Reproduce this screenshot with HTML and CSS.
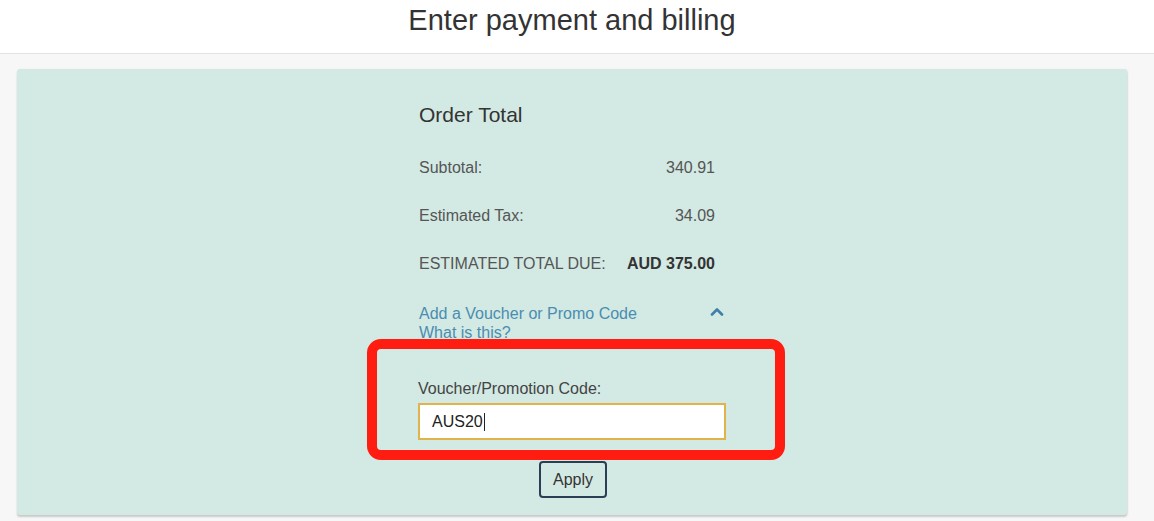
FILE: index.html
```html
<!DOCTYPE html>
<html>
<head>
<meta charset="utf-8">
<link rel="stylesheet" href="styles.css">
</head>
<body>
<header class="top">
  <h1 class="title">Enter payment and billing</h1>
</header>
<main class="page">
  <section class="card">
    <div class="col">
      <h2 class="order-title">Order Total</h2>
      <div class="row"><span>Subtotal:</span><span>340.91</span></div>
      <div class="row"><span>Estimated Tax:</span><span>34.09</span></div>
      <div class="row total"><span>ESTIMATED TOTAL DUE:</span><span class="amt">AUD 375.00</span></div>
      <div class="promo">
        <div class="links">
          <a class="link">Add a Voucher or Promo Code</a>
          <a class="link">What is this?</a>
        </div>
        <svg class="chev" width="14" height="9" viewBox="0 0 14 9"><path d="M2 7.5 L7 2.5 L12 7.5" fill="none" stroke="#3f7fa8" stroke-width="2.6" stroke-linecap="round" stroke-linejoin="round"/></svg>
      </div>
      <div class="highlight">
        <label class="vlabel">Voucher/Promotion Code:</label>
        <div class="input">AUS20<span class="caret"></span></div>
      </div>
      <div class="actions"><button class="apply">Apply</button></div>
    </div>
  </section>
</main>
</body>
</html>
```
FILE: styles.css
```css
html, body { margin: 0; padding: 0; }
body {
  font-family: "Liberation Sans", Arial, sans-serif;
  background: #f7f7f7;
  width: 1154px;
  height: 521px;
  overflow: hidden;
}
.top {
  background: #fff;
  height: 53px;
  border-bottom: 1px solid #e2e2e2;
  display: flex;
  justify-content: center;
  padding-right: 10px;
}
.title {
  margin: 4px 0 0 0;
  font-weight: normal;
  font-size: 29px;
  color: #333;
  letter-spacing: 0;
}
.page {
  padding: 15px 27px 0 17px;
}
.card {
  background: #d3e9e3;
  border-radius: 3px;
  box-shadow: 0 2px 2px rgba(0,0,0,0.18), 1px 0 2px rgba(0,0,0,0.06);
  height: 446px;
  display: flex;
  justify-content: flex-start;
  padding-left: 402px;
  box-sizing: border-box;
}
.col {
  width: 308px;
  display: flex;
  flex-direction: column;
}
.order-title {
  margin: 34px 0 0 0;
  font-weight: normal;
  font-size: 21px;
  color: #333;
}
.row {
  display: flex;
  justify-content: space-between;
  width: 296px;
  font-size: 16px;
  color: #555;
  margin-top: 30px;
}
.row:first-of-type { margin-top: 32px; }
.row.total { margin-top: 30px; }
.amt { font-weight: bold; color: #333; }
.promo {
  display: flex;
  justify-content: space-between;
  align-items: flex-start;
  width: 305px;
  margin-top: 31px;
}
.links { display: flex; flex-direction: column; }
.link {
  color: #4a8db0;
  font-size: 16px;
  line-height: 19px;
}
.chev { margin-top: 3px; }
.highlight {
  margin: -3px 0 0 -52px;
  width: 418px;
  height: 121px;
  box-sizing: border-box;
  border: 10px solid #ff1c10;
  border-radius: 14px;
  padding: 31px 0 0 41px;
}
.vlabel {
  display: block;
  font-size: 16px;
  color: #444;
}
.input {
  margin-top: 5px;
  width: 308px;
  height: 37px;
  box-sizing: border-box;
  border: 2px solid #e0b44a;
  background: #fff;
  font-size: 16px;
  color: #222;
  padding: 8px 0 0 12px;
  display: flex;
  align-items: flex-start;
}
.caret {
  display: inline-block;
  width: 1px;
  height: 18px;
  background: #222;
  margin-left: 1px;
}
.actions {
  display: flex;
  justify-content: center;
  width: 308px;
  margin-top: 1px;
}
.apply {
  width: 68px;
  height: 37px;
  border: 2px solid #2b3e55;
  border-radius: 4px;
  background: transparent;
  font-family: "Liberation Sans", Arial, sans-serif;
  font-size: 16px;
  color: #333;
  padding: 0;
}
```
